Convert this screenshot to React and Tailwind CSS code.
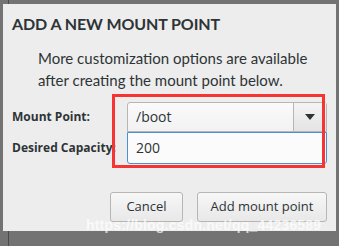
export default function App() {
  return (
    <div className="relative w-[339px] h-[246px] overflow-hidden bg-[#737373] font-['Open_Sans',sans-serif] text-[#2e3436]">
      <div className="absolute left-[8px] top-0 h-full w-[1px] bg-[#4a4a4a]" />
      <div className="relative ml-[3px] mt-[4px] w-[333px] h-[227px] bg-[#ededed] flex flex-col">
        <h1 className="pl-[9px] pt-[9px] text-[16px] leading-[22px] font-bold font-['Lato',sans-serif] tracking-[-0.1px]">
          ADD A NEW MOUNT POINT
        </h1>
        <p className="pl-[35px] mt-[12px] text-[15px] leading-[22px] font-['Lato',sans-serif]">
          More customization options are available
          <br />
          after creating the mount point below.
        </p>
        <div className="mt-[11px] grid grid-cols-[124px_200px] items-center">
          <span className="pl-[9px] text-[12px] font-bold">Mount Point:</span>
          <div className="h-[30px] flex border border-[#b6b6b3] rounded-t-[3px] bg-gradient-to-b from-[#fafafa] to-[#f2f2f2]">
            <span className="flex-1 pl-[8px] text-[14px] leading-[28px]">/boot</span>
            <span className="w-[33px] border-l border-[#b6b6b3] flex items-center justify-center bg-gradient-to-b from-[#f4f4f4] to-[#e4e4e4]">
              <span className="w-0 h-0 border-l-[5px] border-r-[5px] border-t-[6px] border-l-transparent border-r-transparent border-t-[#2e3436]" />
            </span>
          </div>
          <span className="pl-[9px] text-[12px] font-bold whitespace-nowrap">Desired Capacity:</span>
          <div className="h-[32px] border border-[#4a90d9] rounded-b-[3px] bg-[#fbfbfb] pl-[8px] text-[14px] leading-[30px]">
            200
          </div>
        </div>
        <div className="mt-[28px] flex justify-end gap-[14px] pr-[9px]">
          <button className="w-[73px] h-[30px] border border-[#b6b6b3] rounded-[3px] bg-gradient-to-b from-[#f7f7f7] to-[#e8e8e8] text-[13px]">
            Cancel
          </button>
          <button className="w-[130px] h-[30px] border border-[#b6b6b3] rounded-[3px] bg-gradient-to-b from-[#f7f7f7] to-[#e8e8e8] text-[13px]">
            Add mount point
          </button>
        </div>
        <div className="absolute left-[109px] top-[90px] w-[213px] h-[74px] border-[3px] border-[#f73434]" />
      </div>
      <div className="absolute left-[86px] top-[215px] text-[14px] font-bold font-['Liberation_Sans',sans-serif] text-white/70 tracking-[0.2px]">
        https://blog.csdn.net/qq_44236589
      </div>
    </div>
  );
}
